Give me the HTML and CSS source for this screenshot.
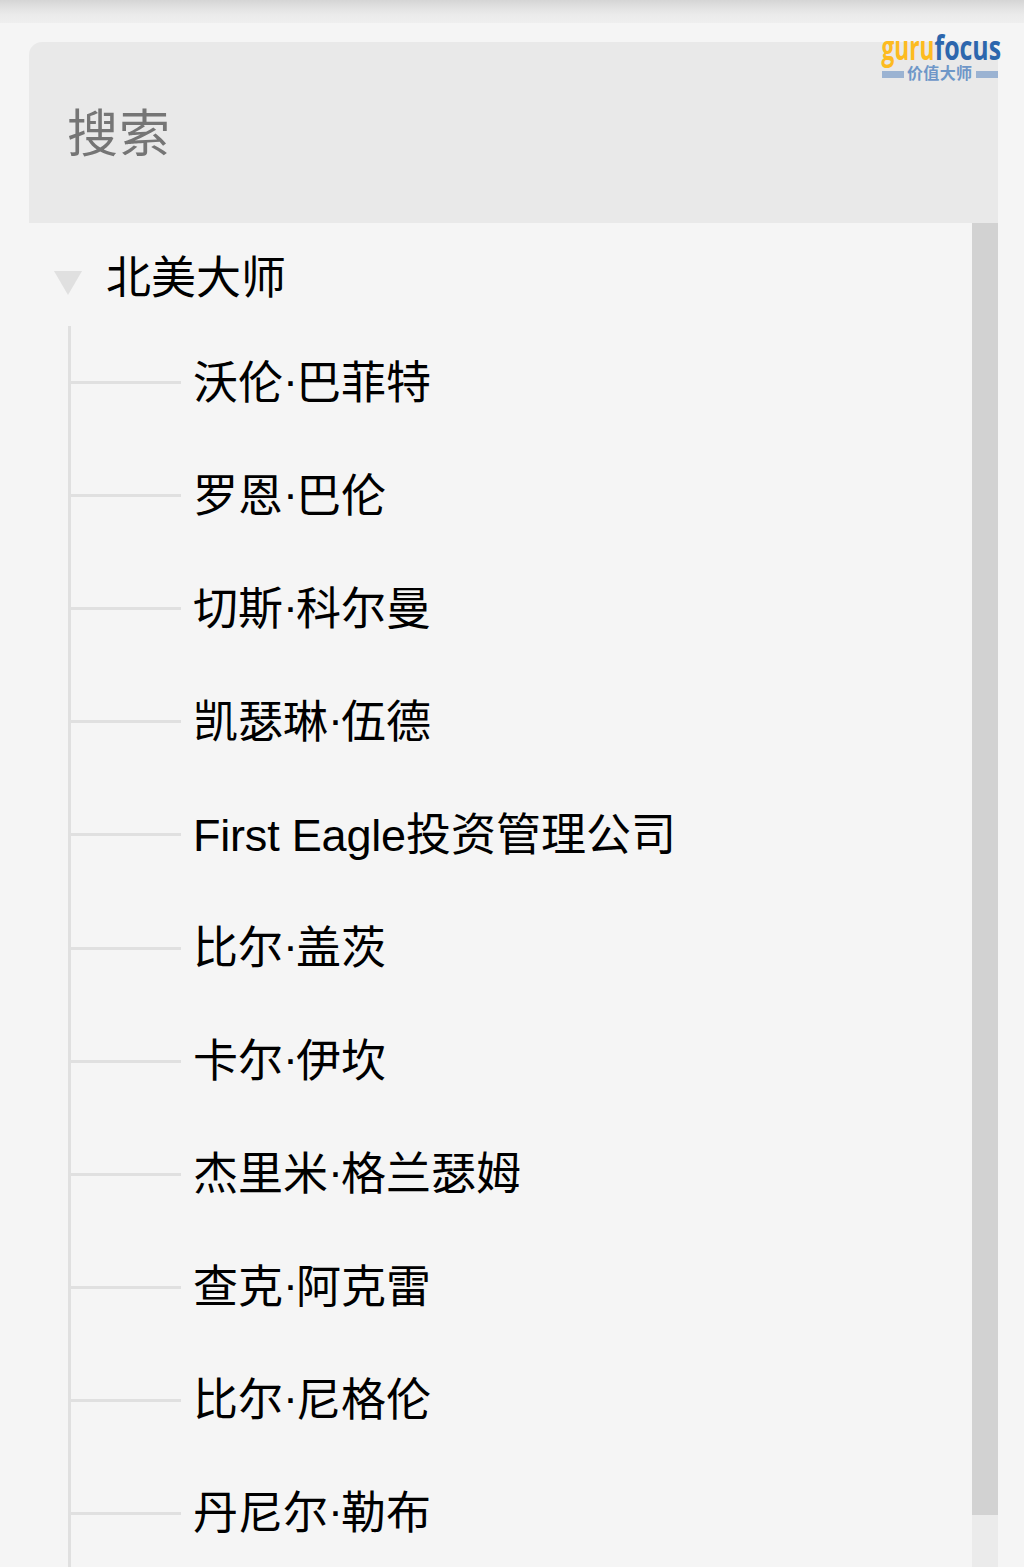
FILE: index.html
```html
<!DOCTYPE html>
<html lang="zh-CN">
<head>
<meta charset="utf-8">
<title>价值大师</title>
<link rel="stylesheet" href="styles.css">
</head>
<body>
<div class="page">
  <div class="top-shadow"></div>
  <svg class="logo" width="124" height="54" viewBox="0 0 124 54">
    <g class="logo-name">
      <text class="guru" x="1.5" y="32" textLength="53" lengthAdjust="spacingAndGlyphs">guru</text>
      <text class="focus" x="54.5" y="32" textLength="66.5" lengthAdjust="spacingAndGlyphs">focus</text>
    </g>
    <rect class="bar" x="2" y="43" width="22" height="7"/>
    <rect class="bar" x="96" y="43" width="22" height="7"/>
    <text class="sub" x="27" y="51" textLength="65">价值大师</text>
  </svg>
  <main class="panel">
    <label class="search"><input class="search-input" type="text" placeholder="搜索"></label>
    <div class="body">
      <div class="tree">
        <div class="group">
          <svg class="arrow" width="30" height="26" viewBox="0 0 30 26"><path d="M1 1H29L15 25Z"/></svg>
          <span class="label">北美大师</span>
        </div>
        <ul class="items">
          <li><span>沃伦<i>·</i>巴菲特</span></li>
          <li><span>罗恩<i>·</i>巴伦</span></li>
          <li><span>切斯<i>·</i>科尔曼</span></li>
          <li><span>凯瑟琳<i>·</i>伍德</span></li>
          <li><span><b>First Eagle</b>投资管理公司</span></li>
          <li><span>比尔<i>·</i>盖茨</span></li>
          <li><span>卡尔<i>·</i>伊坎</span></li>
          <li><span>杰里米<i>·</i>格兰瑟姆</span></li>
          <li><span>查克<i>·</i>阿克雷</span></li>
          <li><span>比尔<i>·</i>尼格伦</span></li>
          <li><span>丹尼尔<i>·</i>勒布</span></li>
        </ul>
      </div>
      <div class="scrollbar"><div class="thumb"></div></div>
    </div>
  </main>
</div>
</body>
</html>
```
FILE: styles.css
```css
* { box-sizing: border-box; }
body {
  margin: 0;
  background: #f5f5f5;
  color: #000;
  font-family: "Liberation Sans", "Noto Sans CJK SC", sans-serif;
}
.page {
  position: relative;
  height: 1567px;
  overflow: hidden;
  display: flex;
  flex-direction: column;
}
.top-shadow {
  flex: none;
  height: 23px;
  background: linear-gradient(#d5d5d5, #e2e2e2 35%, #ebebeb 65%, #efefef);
}
.logo {
  position: absolute;
  left: 880px;
  top: 28px;
  overflow: visible;
}
.logo-name {
  font-family: "Open Sans", sans-serif;
  font-weight: 700;
  font-size: 34px;
}
.guru { fill: #fdbb20; }
.focus { fill: #2c66ad; }
.bar { fill: #9bb3d2; }
.sub {
  fill: #6f97c8;
  font-family: "Noto Sans CJK SC", sans-serif;
  font-weight: 700;
  font-size: 16px;
}
.panel {
  flex: 1;
  min-height: 0;
  margin: 19px 26px 0 29px;
  display: flex;
  flex-direction: column;
}
.search {
  flex: none;
  display: flex;
  align-items: center;
  height: 181px;
  padding: 0 38px 6px;
  background: #e9e9e9;
  border-radius: 13px 13px 0 0;
}
.search-input {
  width: 100%;
  height: 80px;
  padding: 0;
  border: 0;
  background: none;
  font: 400 51px "Noto Sans CJK SC", sans-serif;
  letter-spacing: 1px;
}
.search-input::placeholder { color: #757575; opacity: 1; }
.body {
  flex: 1;
  min-height: 0;
  display: flex;
}
.tree {
  flex: 1;
  padding-left: 23px;
  font-size: 45px;
}
.group {
  display: flex;
  align-items: center;
  height: 103px;
}
.arrow { margin: 17px 23px 0 1px; fill: #e0e0e0; }
.label { line-height: 60px; margin-top: 9px; }
.items {
  list-style: none;
  margin: 0 0 0 16px;
  padding: 0;
  height: 1300px;
  border-left: 3px solid #e0e0e0;
}
.items li {
  display: flex;
  align-items: center;
  height: 113.1px;
  line-height: 60px;
  white-space: nowrap;
}
.items li::before {
  content: "";
  width: 110px;
  height: 3px;
  margin-right: 12px;
  background: #e0e0e0;
}
.items span { padding-top: 2px; }
.items i {
  font-style: normal;
  letter-spacing: -2px;
  vertical-align: 3px;
  line-height: 0;
}
.items b { font-weight: 400; letter-spacing: -0.2px; }
.scrollbar {
  width: 26px;
  background: #ebebeb;
}
.thumb {
  height: 1292px;
  background: #d2d2d2;
}
```
